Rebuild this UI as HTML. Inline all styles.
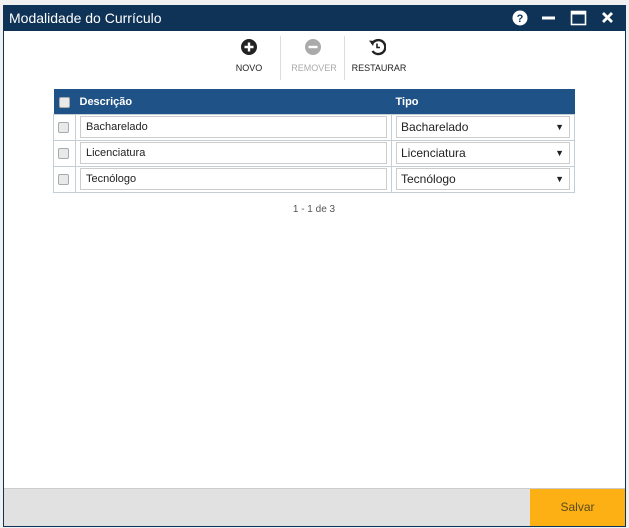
<!DOCTYPE html>
<html><head><meta charset="utf-8"><style>
*{box-sizing:border-box;margin:0;padding:0}
body{width:629px;height:528px;background:#f0f0f0;font-family:"Liberation Sans",sans-serif;position:relative;overflow:hidden}
.win{position:absolute;left:3px;top:5px;width:623px;height:522px;background:#fff;border:1px solid #0f3357;border-top:none}
.title{position:absolute;left:0;top:0;width:621px;height:26px;background:#0f3357;color:#fff;font-size:14px;line-height:26px;padding-left:5px}
.abs{position:absolute}
.lbl{position:absolute;font-size:9px;color:#222;text-align:center;width:70px}
.sep{position:absolute;top:31px;width:1px;height:44px;background:#ddd}
table{position:absolute;left:49px;top:84px;width:522px;border-collapse:collapse;font-size:11px}
th{background:#1f5286;color:#fff;height:25px;text-align:left;font-size:11px;font-weight:bold;padding-left:4px;padding-top:2px}
td{border:1px solid #c3cfd4;height:26px;padding:1px 4px}
.cb{width:11px;height:11px;border:1px solid #aaa;border-radius:2px;background:#e9e9e9;display:block;margin-left:0}
.in{border:1px solid #ccc;height:22px;line-height:20px;padding-left:5px;font-size:11px;color:#222}
.sel{border:1px solid #ccc;height:22px;line-height:20px;padding-left:4px;font-size:12px;color:#222;position:relative}
.sel:after{content:"▼";position:absolute;right:5px;top:0;font-size:9px}
.foot{position:absolute;left:0;top:483px;width:621px;height:38px;background:#e1e1e1;border-top:1px solid #ccc}
.save{position:absolute;right:0;top:0;width:95px;height:37px;background:#fdb014;color:#5a4a20;font-size:12px;text-align:center;line-height:37px}
</style></head><body>
<div class="win">
<div class="title">Modalidade do Currículo</div>
<svg class="abs" style="left:508px;top:5px" width="110" height="16" viewBox="0 0 110 16">
<circle cx="8" cy="8" r="7.5" fill="#fff"/><text x="8" y="12" font-size="11" font-weight="bold" text-anchor="middle" fill="#0f3357" font-family="Liberation Sans">?</text>
<rect x="30" y="6.5" width="13" height="3" fill="#fff"/>
<rect x="59.5" y="1.5" width="14" height="13" fill="none" stroke="#fff" stroke-width="1.6"/><rect x="59.5" y="1.5" width="14" height="3" fill="#fff"/>
<path d="M91 3l9 9M100 3l-9 9" stroke="#fff" stroke-width="2.8"/>
</svg>
<svg class="abs" style="left:236px;top:33px" width="18" height="18"><circle cx="9" cy="9" r="8" fill="#222"/><path d="M9 4.5v9M4.5 9h9" stroke="#fff" stroke-width="2.4"/></svg>
<svg class="abs" style="left:300px;top:33px" width="18" height="18"><circle cx="9" cy="9" r="8" fill="#aaa"/><path d="M4.5 9h9" stroke="#fff" stroke-width="2.4"/></svg>
<svg class="abs" style="left:364px;top:33px" width="18" height="18"><path d="M4 6A7 7 0 1 1 4.5 13" fill="none" stroke="#222" stroke-width="2.4"/><path d="M1 2.5l5.5 0.5-1.5 5z" fill="#222"/><path d="M9 5.5v4h3" fill="none" stroke="#222" stroke-width="1.6"/></svg>
<div class="lbl" style="left:210px;top:58px">NOVO</div>
<div class="lbl" style="left:275px;top:58px;color:#aaa">REMOVER</div>
<div class="lbl" style="left:340px;top:58px">RESTAURAR</div>
<div class="sep" style="left:276px"></div><div class="sep" style="left:340px"></div>
<table>
<tr><th style="width:22px;padding-left:5px"><span class="cb"></span></th><th style="width:316px">Descrição</th><th>Tipo</th></tr>
<tr><td><span class="cb"></span></td><td><div class="in">Bacharelado</div></td><td><div class="sel">Bacharelado</div></td></tr>
<tr><td><span class="cb"></span></td><td><div class="in">Licenciatura</div></td><td><div class="sel">Licenciatura</div></td></tr>
<tr><td><span class="cb"></span></td><td><div class="in">Tecnólogo</div></td><td><div class="sel">Tecnólogo</div></td></tr>
</table>
<div class="abs" style="left:260px;top:199px;width:100px;text-align:center;font-size:10px;color:#555">1 - 1 de 3</div>
<div class="foot"><div class="save">Salvar</div></div>
</div>
</body></html>
